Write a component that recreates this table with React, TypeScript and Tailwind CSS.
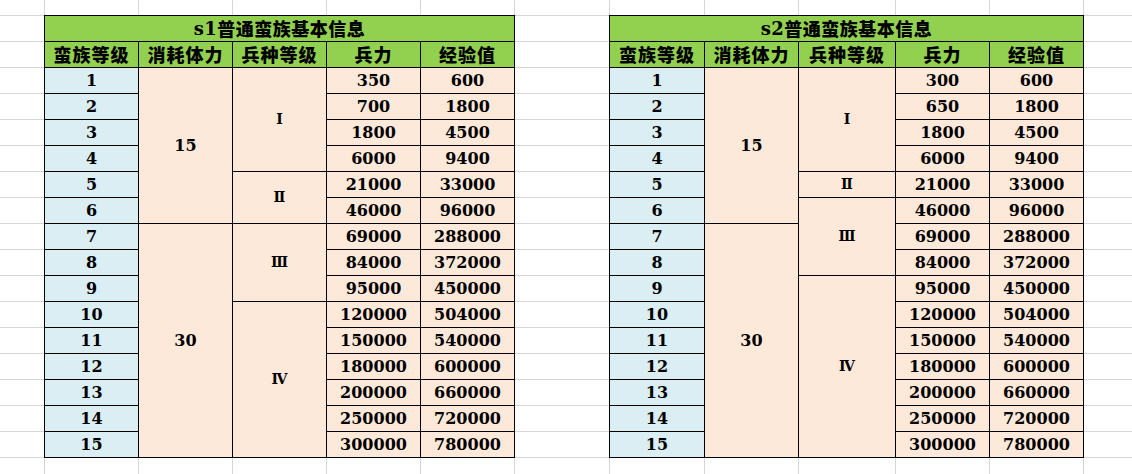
import React from 'react';

type Span = { v: string; span: string };
type Row = { level: number; stamina?: Span; tier?: Span; troops: string; exp: string };

const EXP = ['600', '1800', '4500', '9400', '33000', '96000', '288000', '372000', '450000', '504000', '540000', '600000', '660000', '720000', '780000'];

function buildRows(troops: string[], staminas: Record<number, Span>, tiers: Record<number, Span>): Row[] {
  return troops.map((t, i) => ({
    level: i + 1,
    stamina: staminas[i],
    tier: tiers[i],
    troops: t,
    exp: EXP[i],
  }));
}

const S1 = buildRows(
  ['350', '700', '1800', '6000', '21000', '46000', '69000', '84000', '95000', '120000', '150000', '180000', '200000', '250000', '300000'],
  { 0: { v: '15', span: 'row-span-6' }, 6: { v: '30', span: 'row-span-9' } },
  {
    0: { v: 'Ⅰ', span: 'row-span-4' },
    4: { v: 'Ⅱ', span: 'row-span-2' },
    6: { v: 'Ⅲ', span: 'row-span-3' },
    9: { v: 'Ⅳ', span: 'row-span-6' },
  }
);

const S2 = buildRows(
  ['300', '650', '1800', '6000', '21000', '46000', '69000', '84000', '95000', '120000', '150000', '180000', '200000', '250000', '300000'],
  { 0: { v: '15', span: 'row-span-6' }, 6: { v: '30', span: 'row-span-9' } },
  {
    0: { v: 'Ⅰ', span: 'row-span-4' },
    4: { v: 'Ⅱ', span: 'row-span-1' },
    5: { v: 'Ⅲ', span: 'row-span-3' },
    8: { v: 'Ⅳ', span: 'row-span-7' },
  }
);

const HEADERS = ['蛮族等级', '消耗体力', '兵种等级', '兵力', '经验值'];

const cell = 'border-r border-b border-black flex items-center justify-center';
const num = "font-['DejaVu_Serif','Liberation_Serif',serif] font-bold text-[16px] text-black";
const cjk = "font-['Noto_Sans_CJK_SC',sans-serif] font-black text-[18px] text-black";

function InfoTable({ title, rows, cols, place }: { title: string; rows: Row[]; cols: string; place: string }) {
  return (
    <div className={`${place} ${cols} -ml-px -mt-px grid grid-rows-[repeat(17,26px)] border-l border-t border-black`}>
      <div className={`${cell} col-span-5 bg-[#92d050] ${cjk} tracking-[0.5px]`}>
        <span className="font-['DejaVu_Serif',serif] font-bold">{title.slice(0, 2)}</span>
        <span>{title.slice(2)}</span>
      </div>
      {HEADERS.map((h) => (
        <div key={h} className={`${cell} bg-[#92d050] ${cjk} tracking-[1px]`}>
          {h}
        </div>
      ))}
      {rows.map((r) => (
        <React.Fragment key={r.level}>
          <div className={`${cell} bg-[#daeef3] ${num}`}>{r.level}</div>
          {r.stamina && <div className={`${cell} ${r.stamina.span} bg-[#fde9d9] ${num}`}>{r.stamina.v}</div>}
          {r.tier && (
            <div className={`${cell} ${r.tier.span} bg-[#fde9d9] font-['DejaVu_Serif',serif] font-bold text-[14px] text-black`}>
              {r.tier.v}
            </div>
          )}
          <div className={`${cell} bg-[#fde9d9] ${num}`}>{r.troops}</div>
          <div className={`${cell} bg-[#fde9d9] ${num}`}>{r.exp}</div>
        </React.Fragment>
      ))}
    </div>
  );
}

const sheetCols = 'grid-cols-[45px_94px_94px_94px_94px_94px_95px_95px_94px_97px_94px_94px_1fr]';
const sheetRows = 'grid-rows-[16px_repeat(17,26px)_1fr]';

export default function App() {
  const bg = Array.from({ length: 13 * 19 }, (_, i) => {
    const c = i % 13;
    const r = Math.floor(i / 13);
    return (
      <div
        key={i}
        className={`border-[#d6d6d6] ${c < 12 ? 'border-r' : ''} ${r < 18 ? 'border-b' : ''}`}
      />
    );
  });

  return (
    <div className="grid h-[474px] w-full overflow-hidden bg-white">
      <div className={`[grid-area:1/1] grid ${sheetCols} ${sheetRows}`}>{bg}</div>
      <div className={`[grid-area:1/1] grid ${sheetCols} ${sheetRows}`}>
        <InfoTable
          title="s1普通蛮族基本信息"
          rows={S1}
          cols="grid-cols-[94px_94px_94px_94px_94px]"
          place="col-[2/span_5] row-[2/span_17]"
        />
        <InfoTable
          title="s2普通蛮族基本信息"
          rows={S2}
          cols="grid-cols-[95px_94px_97px_94px_94px]"
          place="col-[8/span_5] row-[2/span_17]"
        />
      </div>
    </div>
  );
}
